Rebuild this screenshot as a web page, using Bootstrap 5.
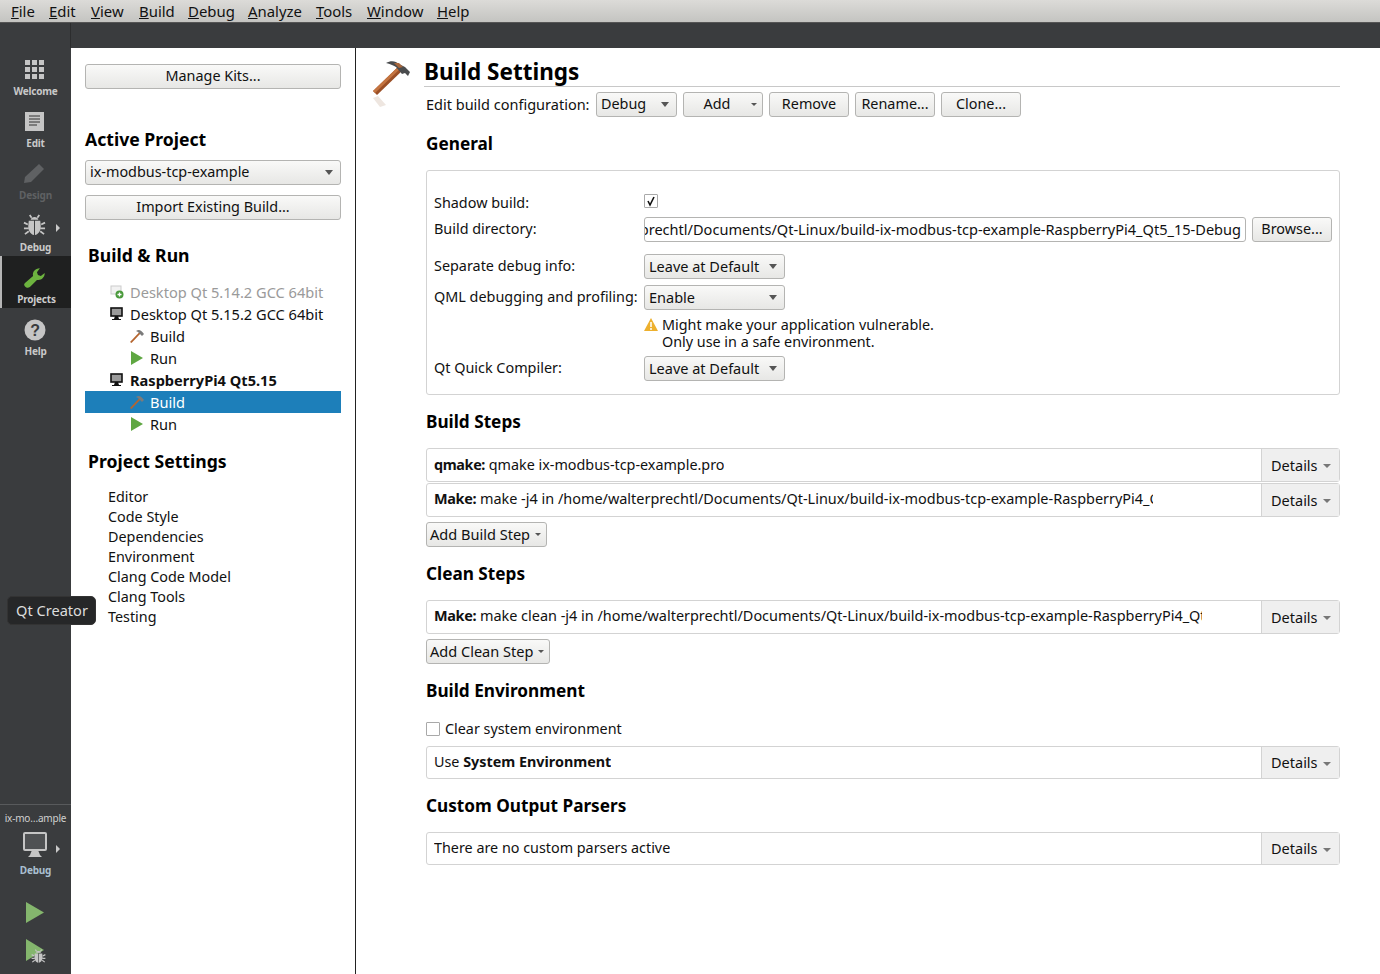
<!DOCTYPE html>
<html lang="en"><head><meta charset="utf-8"><title>Qt Creator</title>
<link href="https://cdn.jsdelivr.net/npm/bootstrap@5.3.0/dist/css/bootstrap.min.css" rel="stylesheet">
<style>
html,body{height:974px;overflow:hidden}
body{font-family:"Noto Sans","Liberation Sans",sans-serif;font-size:14.35px;color:#111;background:#fff;position:relative;line-height:20px}
.menu-strip{height:23px;background:linear-gradient(#dcdbd8,#c4c4c1);border-bottom:1px solid #555;font-size:14.9px;padding-left:11px}
.menu-strip span{display:block}
.menu-strip span:nth-child(1){width:38px}.menu-strip span:nth-child(2){width:42px}.menu-strip span:nth-child(3){width:48px}.menu-strip span:nth-child(4){width:49px}.menu-strip span:nth-child(5){width:60px}.menu-strip span:nth-child(6){width:68px}.menu-strip span:nth-child(7){width:51px}.menu-strip span:nth-child(8){width:70px}
.tool-strip{height:25px;background:#3a3c3e}
.tool-gap{width:71px;border-right:1px solid #2c2d2e}
.body-area{height:926px}
.side-rail{width:71px;background:#3a3c3e;color:#c9c9c9;flex:none}
.rail-item{height:52px;font-size:10px;letter-spacing:-.2px;font-weight:700;position:relative;line-height:13px;padding-top:9px}
.rail-item svg{display:block;height:24px;margin-bottom:4px}
.rail-item.on{background:#1f2020;border-left:2px solid #b5b5b5;color:#ccc}
.rail-item.on svg{margin-left:-1px}
.rail-item.off{color:#5f6163}
.rail-arrow{position:absolute;left:56px;top:20px;width:0;height:0;border-left:4px solid #c9c9c9;border-top:4px solid transparent;border-bottom:4px solid transparent}
.rail-foot{border-top:1px solid #585a5c;height:170px;padding-top:6px;font-size:10px;letter-spacing:-.2px;line-height:14px}
.rail-foot .kit-name{font-weight:400;color:#d0d0d0;height:14px}
.rail-foot .mon{position:relative;height:38px;padding-top:7px}
.rail-foot .cfg{font-weight:700;color:#a9bfd0;height:14px}
.run-a{margin-top:23px}
.run-b{margin-top:11px}
.left-pane{width:285px;flex:none;border-right:1px solid #222;padding:16px 14px 0 14px;position:relative}
.qbtn{display:flex;align-items:center;justify-content:center;height:25px;padding:0 0 1px;border:1px solid #b4b4b2;border-radius:3px;background:linear-gradient(#f9f9f8,#e7e7e5);color:#111;font-size:14.4px;line-height:20px;position:relative}
.qcombo{justify-content:flex-start;padding-left:4px}
.qcombo::after{content:"";position:absolute;right:7px;top:9px;border-top:5px solid #555;border-left:4px solid transparent;border-right:4px solid transparent}
.caret-small::after{right:5px;top:10px;border-top-width:3px;border-left-width:3px;border-right-width:3px}
.pane-h{font-weight:700;font-size:17.6px;line-height:24px;color:#000}
.tree-row{height:22px;line-height:22px;display:flex;align-items:center;white-space:nowrap;font-size:14.6px}
.tree-row svg{flex:none}
.lvl1{padding-left:25px}.lvl1 svg{width:14px;height:14px;margin-right:6px}
.lvl2{padding-left:45px}.lvl2 svg{width:14px;height:14px;margin-right:6px}
.tree-row.sel{background:#1d7fba;color:#fff}
.tree-row.dim{color:#9a9a9a}
.ps-list{padding-left:23px;margin:14px 0 0}
.ps-list div{height:20px}
.tip-box{position:absolute;left:7px;top:596px;width:89px;height:29px;background:#262728;color:#ddd;border-radius:5px;border:1px solid #333;display:flex;align-items:center;justify-content:center;font-size:14.6px;padding:0 0 2px 1px;z-index:5}
.main-pane{flex:1;padding:12px 40px 0 68px;position:relative}
.hammer-big{position:absolute;left:16px;top:12px;width:39px;height:48px}
.title-big{font-weight:700;font-size:22.5px;line-height:24px;color:#000;border-bottom:1px solid #c8c8c8;height:27px;white-space:nowrap}
.conf-row{height:25px;margin:5px 0 0 2px;white-space:nowrap}
.conf-lbl{width:170px;padding-bottom:1px;font-size:14.5px}
.sec-h{font-weight:700;font-size:17.2px;line-height:24px;margin-left:2px;color:#000;white-space:nowrap}
.gen-box{margin:14px 0 0 2px;height:225px;border:1px solid #d3d3d3;border-radius:3px;padding:0 7px;background:#fff}
.fld{display:flex;align-items:center;white-space:nowrap}
.fld-lbl{width:210px;flex:none;padding-bottom:1px;font-size:14.4px}
.tickbox{width:14px;height:14px;border:1px solid #a9a9a9;background:#fff;border-radius:1px;display:block;flex:none;position:relative}
.path-in{width:602px;height:25px;border:1px solid #b4b4b2;border-radius:3px;display:flex;align-items:center;justify-content:flex-end;overflow:hidden;padding:0 4px 1px 0;background:#fff;margin-right:6px;flex:none;white-space:nowrap;font-size:14.55px}
.path-in span{flex:none}
.w-80{width:80px}.w-81{width:81px}.w-141{width:141px;font-size:14.5px}
.warn-line{padding-left:210px;line-height:17px;position:relative}
.warn-line svg{position:absolute;left:210px;top:2px;width:14px;height:13px}
.warn-line div{padding-left:18px}
.step-row{display:flex;height:34px;margin-left:2px;border:1px solid #d3d3d3;border-radius:3px;align-items:stretch;white-space:nowrap;background:#fff}
.step-txt{flex:1;padding:0 0 1px 7px;display:flex;align-items:center;overflow:hidden}
.step-txt span{overflow:hidden;display:block}
.step-txt b{letter-spacing:-.35px}
.step-txt b.plain-b{letter-spacing:0}
.clip-a{max-width:719px;font-size:14.45px;margin-top:-2px}.clip-b{max-width:768px;font-size:14.45px;margin-top:-2px}
.det-btn{width:78px;flex:none;background:#efefef;border-left:1px solid #d3d3d3;display:flex;align-items:center;padding:0 0 1px 9px;position:relative;font-size:14.5px}
.det-btn::after{content:"";position:absolute;right:8px;top:15px;border-top:4px solid #777;border-left:4px solid transparent;border-right:4px solid transparent}
.h-33{height:33px}
.sm-btn{height:25px;margin:5px 0 0 2px;padding-left:3px;justify-content:flex-start;font-size:14.55px}
.w-121{width:121px}.w-124{width:124px}
.add-btn{justify-content:center;margin-left:6px;padding-right:16px}
.gap-6{margin-left:6px}
</style></head>
<body>
<svg width="0" height="0" class="position-absolute">
<symbol id="s-hammer" viewBox="0 0 39 48">
<path d="M1 31 L5 35 L32 9 L28 5Z" fill="#9b4f26"/>
<path d="M1 31 L3 33 L30 7 L28 5Z" fill="#c47440"/>
<path d="M14 3 C19 0 24 1 27 4 L33 7 L38 12 L36 16 L33 13 L30 14 L24 7 C21 5 18 4 14 3Z" fill="#4a4c4e"/>
<path d="M22 3 L27 3 L31 7 L27 8Z" fill="#a7663c"/>
<path d="M1 38 L6 36 L14 45 L8 47Z" fill="#eee6e0"/>
</symbol>
<symbol id="s-tham" viewBox="0 0 14 14">
<path d="M0 13 L1.500 14 L11 4 L9.500 3Z" fill="#b5652f"/>
<path d="M6 2 C9 0 11 1 14 5 L12 7 L8 3Z" fill="#7b7b7b"/>
</symbol>
<symbol id="s-mon" viewBox="0 0 14 14">
<rect x="1" y="1" width="11" height="8" fill="#9a9a9a" stroke="#111" stroke-width="1.600"/>
<path d="M5 9h3l1 3h2v1H2v-1h2z" fill="#111"/>
</symbol>
<symbol id="s-play" viewBox="0 0 14 14"><path d="M1 0L13 7L1 14Z" fill="#5fa742"/></symbol>
<symbol id="s-bug" viewBox="0 0 24 24">
<path d="M12 3c-2 0-3.500 1-4 3h8c-.5-2-2-3-4-3z" fill="#c5c5c5"/>
<path d="M6 7h5.500v15C8 21.500 5 17 5.500 12zM12.500 7H18l.5 5c.5 5-2.500 9.500-6 10z" fill="#c5c5c5"/>
<path d="M7 1l2 3M17 1l-2 3M1 9l4 2M23 9l-4 2M1 15h5M23 15h-5M2 21l4-3M22 21l-4-3" stroke="#c5c5c5" stroke-width="1.800" fill="none"/>
</symbol>
</svg>

<div class="menu-strip d-flex align-items-center">
<span><u>F</u>ile</span><span><u>E</u>dit</span><span><u>V</u>iew</span><span><u>B</u>uild</span><span><u>D</u>ebug</span><span><u>A</u>nalyze</span><span><u>T</u>ools</span><span><u>W</u>indow</span><span><u>H</u>elp</span>
</div>
<div class="tool-strip d-flex"><div class="tool-gap"></div></div>

<div class="body-area d-flex">
<div class="side-rail d-flex flex-column text-center">
 <div class="rail-item"><svg class="w-100" viewBox="0 0 71 24"><path fill="#c5c5c5" d="M25 3h5v5h-5zM32 3h5v5h-5zM39 3h5v5h-5zM25 10h5v5h-5zM32 10h5v5h-5zM39 10h5v5h-5zM25 17h5v5h-5zM32 17h5v5h-5zM39 17h5v5h-5z"/></svg>Welcome</div>
 <div class="rail-item"><svg class="w-100" viewBox="0 0 71 24"><rect x="25" y="3" width="19" height="19" fill="#c5c5c5"/><path d="M29 7h11M29 10h11M29 13h11M29 16h8" stroke="#333" stroke-width="1"/></svg>Edit</div>
 <div class="rail-item off"><svg class="w-100" viewBox="0 0 71 24"><path d="M24 22l1-6L39 3l5 5-13 13z" fill="#5f6163"/></svg>Design</div>
 <div class="rail-item"><svg class="w-100" viewBox="0 0 71 24"><use href="#s-bug" x="23" y="1" width="23" height="23"/></svg>Debug<i class="rail-arrow"></i></div>
 <div class="rail-item on"><svg class="w-100" viewBox="0 0 71 24"><path d="M25 22c-2-2-1-3 0-4l8-7c-1-4 2-8 7-8l-3 4 1 3 3 1 4-3c0 5-4 8-8 7l-7 7c-2 1-3 2-5 0z" fill="#6db33f"/></svg>Projects</div>
 <div class="rail-item"><svg class="w-100" viewBox="0 0 71 24"><circle cx="35" cy="13" r="10.500" fill="#c5c5c5"/><text x="35" y="19" text-anchor="middle" font-family="Liberation Sans" font-weight="700" font-size="16" fill="#3a3c3e">?</text></svg>Help</div>
 <div class="rail-foot mt-auto">
  <div class="kit-name">ix-mo…ample</div>
  <div class="mon"><svg width="71" height="27" viewBox="0 0 71 27"><rect x="24" y="1" width="22" height="17" rx="1" fill="#4f5153" stroke="#c5c5c5" stroke-width="2"/><path d="M32 18h6l2 5 2 2H28l2-2z" fill="#c5c5c5"/></svg><i class="rail-arrow"></i></div>
  <div class="cfg">Debug</div>
  <svg class="d-block run-a" width="71" height="26" viewBox="0 0 71 26"><path d="M26 2L44 12.500L26 23Z" fill="#84b66d"/></svg>
  <svg class="d-block run-b" width="71" height="28" viewBox="0 0 71 28"><path d="M26 2L44 13L26 24Z" fill="#84b66d"/><use href="#s-bug" x="31" y="12" width="15" height="15"/></svg>
 </div>
</div>

<div class="left-pane">
 <button type="button" class="btn qbtn w-100">Manage Kits...</button>
 <div class="pane-h" style="margin-top:38px">Active Project</div>
 <button type="button" class="btn qbtn qcombo w-100" style="margin-top:9px">ix-modbus-tcp-example</button>
 <button type="button" class="btn qbtn w-100" style="margin-top:10px">Import Existing Build...</button>
 <div class="pane-h" style="margin-top:23px;padding-left:3px">Build &amp; Run</div>
 <div style="margin-top:14px">
  <div class="tree-row lvl1 dim"><svg viewBox="0 0 14 14"><rect x="1" y="1" width="10" height="8" fill="#f2f2f2" stroke="#ccc"/><circle cx="9.500" cy="9.500" r="4" fill="#4a9a3c"/><path d="M7.500 9.500h4M9.500 7.500v4" stroke="#fff" stroke-width="1.300"/></svg>Desktop Qt 5.14.2 GCC 64bit</div>
  <div class="tree-row lvl1"><svg><use href="#s-mon"/></svg>Desktop Qt 5.15.2 GCC 64bit</div>
  <div class="tree-row lvl2"><svg><use href="#s-tham"/></svg>Build</div>
  <div class="tree-row lvl2"><svg><use href="#s-play"/></svg>Run</div>
  <div class="tree-row lvl1 fw-bold"><svg><use href="#s-mon"/></svg>RaspberryPi4 Qt5.15</div>
  <div class="tree-row lvl2 sel"><svg><use href="#s-tham"/></svg>Build</div>
  <div class="tree-row lvl2"><svg><use href="#s-play"/></svg>Run</div>
 </div>
 <div class="pane-h" style="margin-top:14px;padding-left:3px">Project Settings</div>
 <div class="ps-list"><div>Editor</div><div>Code Style</div><div>Dependencies</div><div>Environment</div><div>Clang Code Model</div><div>Clang Tools</div><div>Testing</div></div>
</div>

<div class="main-pane">
 <svg class="hammer-big"><use href="#s-hammer"/></svg>
 <div class="title-big">Build Settings</div>
 <div class="conf-row d-flex align-items-center">
  <div class="conf-lbl">Edit build configuration:</div>
  <button type="button" class="btn qbtn qcombo w-81">Debug</button>
  <button type="button" class="btn qbtn qcombo caret-small w-80 add-btn">Add</button>
  <button type="button" class="btn qbtn w-80 gap-6">Remove</button>
  <button type="button" class="btn qbtn w-80 gap-6">Rename...</button>
  <button type="button" class="btn qbtn w-80 gap-6">Clone...</button>
 </div>
 <div class="sec-h" style="margin-top:15px">General</div>
 <div class="gen-box">
  <div class="fld" style="margin-top:22px;height:20px"><div class="fld-lbl">Shadow build:</div><i class="tickbox" style="margin-top:-4px"><svg class="d-block" width="12" height="12" viewBox="0 0 12 12"><path d="M3 6l2 4 4-8" fill="none" stroke="#111" stroke-width="1.600"/></svg></i></div>
  <div class="fld" style="margin-top:4px;height:25px"><div class="fld-lbl">Build directory:</div><div class="path-in"><span>/home/walterprechtl/Documents/Qt-Linux/build-ix-modbus-tcp-example-RaspberryPi4_Qt5_15-Debug</span></div><button type="button" class="btn qbtn w-80">Browse...</button></div>
  <div class="fld" style="margin-top:12px;height:25px"><div class="fld-lbl">Separate debug info:</div><button type="button" class="btn qbtn qcombo w-141">Leave at Default</button></div>
  <div class="fld" style="margin-top:6px;height:25px"><div class="fld-lbl">QML debugging and profiling:</div><button type="button" class="btn qbtn qcombo w-141">Enable</button></div>
  <div class="warn-line" style="margin-top:6px"><svg viewBox="0 0 14 13"><path d="M7 0L14 13H0Z" fill="#edb02e"/><path d="M7 4v5M7 10v2" stroke="#fff" stroke-width="1.500"/></svg><div>Might make your application vulnerable.</div><div>Only use in a safe environment.</div></div>
  <div class="fld" style="margin-top:6px;height:25px"><div class="fld-lbl">Qt Quick Compiler:</div><button type="button" class="btn qbtn qcombo w-141">Leave at Default</button></div>
 </div>
 <div class="sec-h" style="margin-top:15px">Build Steps</div>
 <div class="step-row" style="margin-top:14px"><div class="step-txt"><span><b>qmake:</b> qmake ix-modbus-tcp-example.pro</span></div><div class="det-btn">Details</div></div>
 <div class="step-row" style="margin-top:1px"><div class="step-txt"><span class="clip-a"><b>Make:</b> make -j4 in /home/walterprechtl/Documents/Qt-Linux/build-ix-modbus-tcp-example-RaspberryPi4_Qt5_15-Debug</span></div><div class="det-btn">Details</div></div>
 <button type="button" class="btn qbtn qcombo caret-small sm-btn w-121">Add Build Step</button>
 <div class="sec-h" style="margin-top:15px">Clean Steps</div>
 <div class="step-row" style="margin-top:14px"><div class="step-txt"><span class="clip-b"><b>Make:</b> make clean -j4 in /home/walterprechtl/Documents/Qt-Linux/build-ix-modbus-tcp-example-RaspberryPi4_Qt5_15-Debug</span></div><div class="det-btn">Details</div></div>
 <button type="button" class="btn qbtn qcombo caret-small sm-btn w-124">Add Clean Step</button>
 <div class="sec-h" style="margin-top:15px">Build Environment</div>
 <div class="fld" style="margin:16px 0 0 2px;height:20px"><i class="tickbox" style="margin-right:5px"></i>Clear system environment</div>
 <div class="step-row h-33" style="margin-top:7px"><div class="step-txt"><span>Use <b class="plain-b">System Environment</b></span></div><div class="det-btn">Details</div></div>
 <div class="sec-h" style="margin-top:15px">Custom Output Parsers</div>
 <div class="step-row h-33" style="margin-top:14px"><div class="step-txt"><span>There are no custom parsers active</span></div><div class="det-btn">Details</div></div>
</div>
</div>
<div class="tip-box">Qt Creator</div>
<script src="https://cdn.jsdelivr.net/npm/bootstrap@5.3.0/dist/js/bootstrap.bundle.min.js"></script>
</body></html>
